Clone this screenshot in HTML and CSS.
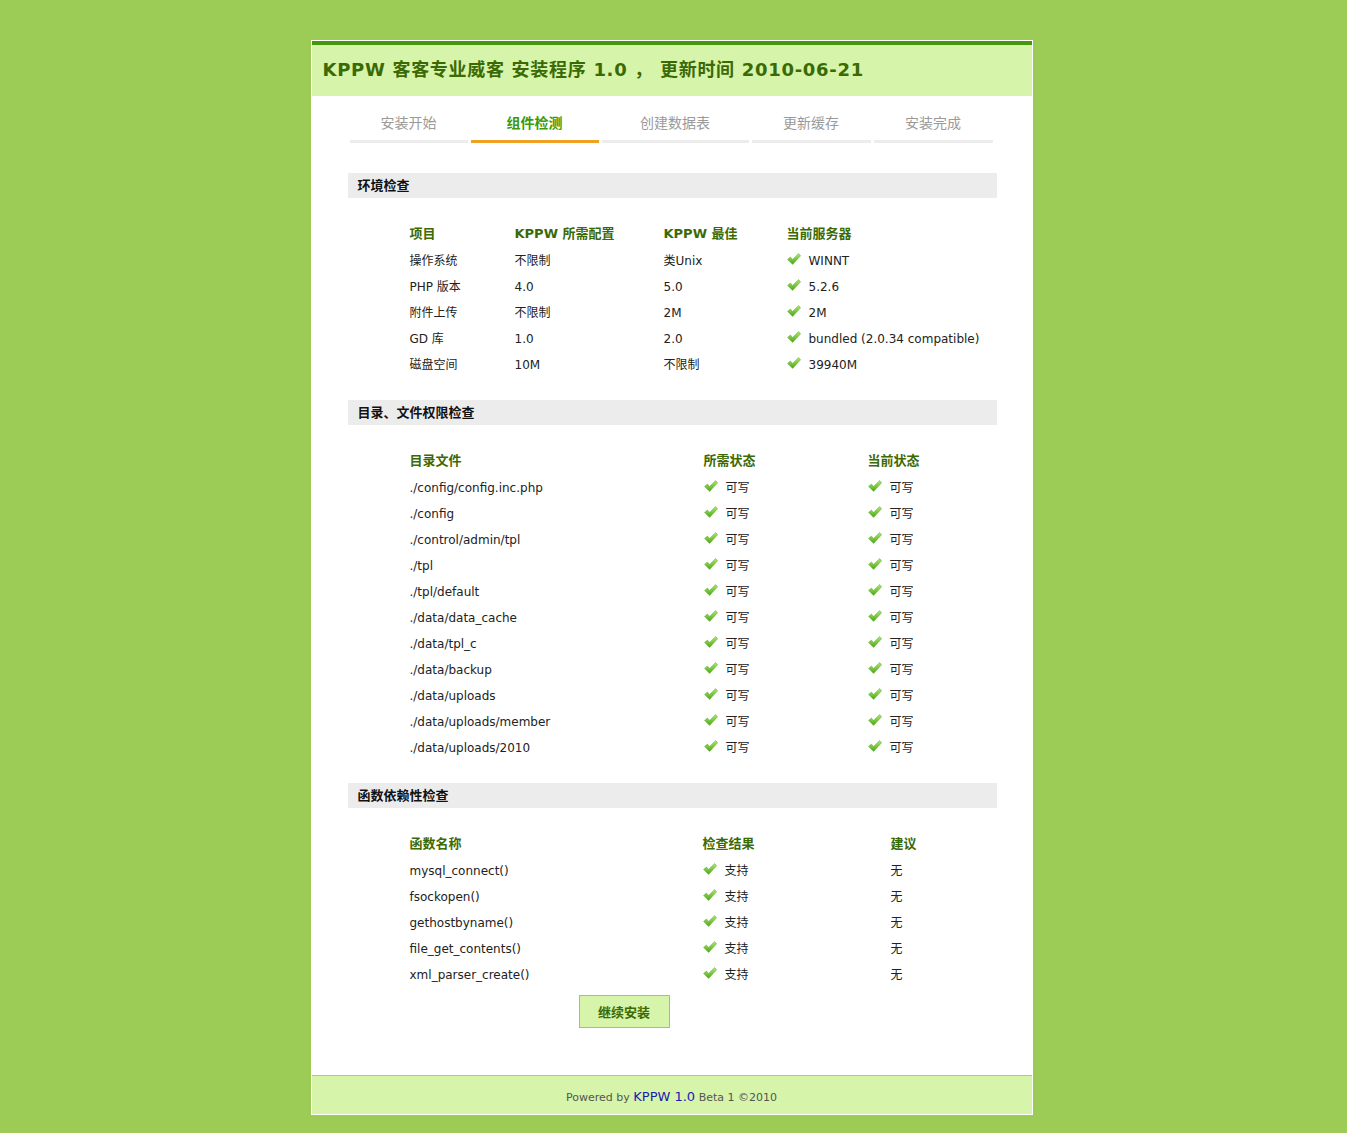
FILE: index.html
```html
<!DOCTYPE html>
<html>
<head>
    <meta charset="utf-8">
    <title>KPPW 安装程序 - 组件检测</title>
    <link rel="stylesheet" href="styles.css">
</head>
<body>
    <svg width="0" height="0" class="defs">
        <defs>
            <linearGradient id="ok-grad" x1="0" y1="0" x2="0" y2="1">
                <stop offset="0" stop-color="#acea70"/>
                <stop offset="1" stop-color="#4ca814"/>
            </linearGradient>
            <symbol id="ok" viewBox="0 0 14 12">
                <path d="M0.6 6.4 L3.4 4 L5.6 6.5 L11.6 0.6 L13.6 2.8 L5.6 11.4 Z" fill="url(#ok-grad)" stroke="#5aa824" stroke-width="0.5"/>
            </symbol>
        </defs>
    </svg>

    <div class="wrap">
        <div class="head">
            <h1>KPPW 客客专业威客 安装程序 1.0 ， 更新时间 2010-06-21</h1>
        </div>

        <div class="main">
            <ul class="steps">
                <li>安装开始</li>
                <li class="on">组件检测</li>
                <li>创建数据表</li>
                <li>更新缓存</li>
                <li>安装完成</li>
            </ul>

            <h2 class="sect">环境检查</h2>
            <div class="grid env">
                <div class="row th"><span>项目</span><span>KPPW 所需配置</span><span>KPPW 最佳</span><span>当前服务器</span></div>
                <div class="row"><span>操作系统</span><span>不限制</span><span>类Unix</span><span class="ok"><svg><use href="#ok"/></svg>WINNT</span></div>
                <div class="row"><span>PHP 版本</span><span>4.0</span><span>5.0</span><span class="ok"><svg><use href="#ok"/></svg>5.2.6</span></div>
                <div class="row"><span>附件上传</span><span>不限制</span><span>2M</span><span class="ok"><svg><use href="#ok"/></svg>2M</span></div>
                <div class="row"><span>GD 库</span><span>1.0</span><span>2.0</span><span class="ok"><svg><use href="#ok"/></svg>bundled (2.0.34 compatible)</span></div>
                <div class="row"><span>磁盘空间</span><span>10M</span><span>不限制</span><span class="ok"><svg><use href="#ok"/></svg>39940M</span></div>
            </div>

            <h2 class="sect">目录、文件权限检查</h2>
            <div class="grid dirs">
                <div class="row th"><span>目录文件</span><span>所需状态</span><span>当前状态</span></div>
                <div class="row"><span>./config/config.inc.php</span><span class="ok"><svg><use href="#ok"/></svg>可写</span><span class="ok"><svg><use href="#ok"/></svg>可写</span></div>
                <div class="row"><span>./config</span><span class="ok"><svg><use href="#ok"/></svg>可写</span><span class="ok"><svg><use href="#ok"/></svg>可写</span></div>
                <div class="row"><span>./control/admin/tpl</span><span class="ok"><svg><use href="#ok"/></svg>可写</span><span class="ok"><svg><use href="#ok"/></svg>可写</span></div>
                <div class="row"><span>./tpl</span><span class="ok"><svg><use href="#ok"/></svg>可写</span><span class="ok"><svg><use href="#ok"/></svg>可写</span></div>
                <div class="row"><span>./tpl/default</span><span class="ok"><svg><use href="#ok"/></svg>可写</span><span class="ok"><svg><use href="#ok"/></svg>可写</span></div>
                <div class="row"><span>./data/data_cache</span><span class="ok"><svg><use href="#ok"/></svg>可写</span><span class="ok"><svg><use href="#ok"/></svg>可写</span></div>
                <div class="row"><span>./data/tpl_c</span><span class="ok"><svg><use href="#ok"/></svg>可写</span><span class="ok"><svg><use href="#ok"/></svg>可写</span></div>
                <div class="row"><span>./data/backup</span><span class="ok"><svg><use href="#ok"/></svg>可写</span><span class="ok"><svg><use href="#ok"/></svg>可写</span></div>
                <div class="row"><span>./data/uploads</span><span class="ok"><svg><use href="#ok"/></svg>可写</span><span class="ok"><svg><use href="#ok"/></svg>可写</span></div>
                <div class="row"><span>./data/uploads/member</span><span class="ok"><svg><use href="#ok"/></svg>可写</span><span class="ok"><svg><use href="#ok"/></svg>可写</span></div>
                <div class="row"><span>./data/uploads/2010</span><span class="ok"><svg><use href="#ok"/></svg>可写</span><span class="ok"><svg><use href="#ok"/></svg>可写</span></div>
            </div>

            <h2 class="sect">函数依赖性检查</h2>
            <div class="grid funcs">
                <div class="row th"><span>函数名称</span><span>检查结果</span><span>建议</span></div>
                <div class="row"><span>mysql_connect()</span><span class="ok"><svg><use href="#ok"/></svg>支持</span><span>无</span></div>
                <div class="row"><span>fsockopen()</span><span class="ok"><svg><use href="#ok"/></svg>支持</span><span>无</span></div>
                <div class="row"><span>gethostbyname()</span><span class="ok"><svg><use href="#ok"/></svg>支持</span><span>无</span></div>
                <div class="row"><span>file_get_contents()</span><span class="ok"><svg><use href="#ok"/></svg>支持</span><span>无</span></div>
                <div class="row"><span>xml_parser_create()</span><span class="ok"><svg><use href="#ok"/></svg>支持</span><span>无</span></div>
            </div>

            <div class="actions">
                <button class="btn">继续安装</button>
            </div>
        </div>

        <div class="foot">
            Powered by <a href="#">KPPW 1.0</a> Beta 1 &copy;2010
        </div>
    </div>
</body>
</html>
```

FILE: styles.css
```css
body {
    margin: 0;
    padding: 0;
    background: #9ccb56;
    font-family: "DejaVu Sans", "Noto Sans CJK SC", sans-serif;
    font-size: 12px;
    color: #222;
}

.defs {
    position: absolute;
    width: 0;
    height: 0;
}

.wrap {
    width: 720px;
    margin: 40px 0 0 calc(50% - 363px);
    border: 1px solid #fff;
    background: #fff;
}

.head {
    background: #d6f4aa;
    border-top: 4px solid #45980b;
    height: 51px;
}

.head h1 {
    margin: 0;
    padding-left: 11px;
    line-height: 50px;
    font-size: 18px;
    letter-spacing: 0.7px;
    color: #3b6a04;
    font-weight: bold;
}

.main {
    padding: 0 35px 47px 36px;
}

/* step tabs */
.steps {
    list-style: none;
    margin: 0;
    padding: 14px 0 0 2px;
    display: grid;
    grid-template-columns: 118px 128px 147px 119px 119px;
    gap: 3px;
}

.steps li {
    text-align: center;
    line-height: 26px;
    padding-bottom: 4px;
    border-bottom: 3px solid #ececec;
    font-size: 14px;
    color: #9a9a9a;
}

.steps li.on {
    border-bottom-color: #f0a124;
    color: #3c9a08;
    font-weight: bold;
}

/* section headings */
.sect {
    margin: 30px 0 0;
    height: 25px;
    line-height: 25px;
    padding-left: 10px;
    background: #ececec;
    font-size: 13px;
    font-weight: bold;
    color: #111;
}

.grid + .sect {
    margin-top: 22px;
}

.grid {
    margin-top: 22px;
    padding-left: 62px;
}

.row {
    display: grid;
    height: 26px;
    line-height: 27px;
    align-items: center;
}

.row.th {
    margin-bottom: 2px;
    color: #3b6a04;
    font-size: 13px;
    font-weight: bold;
}

.env .row {
    grid-template-columns: 105px 149px 123px 1fr;
}

.dirs .row {
    grid-template-columns: 294px 164px 1fr;
}

.funcs .row {
    grid-template-columns: 293px 188px 1fr;
}

.ok {
    display: flex;
    align-items: center;
}

.ok svg {
    width: 14px;
    height: 12px;
    margin: -6px 8px 0 0;
    flex: none;
}

.actions {
    padding: 7px 0 0 231px;
}

.btn {
    width: 91px;
    height: 33px;
    background: #d6f4aa;
    border: 1px solid #9ccb56;
    font-family: inherit;
    font-size: 13px;
    font-weight: bold;
    color: #3b6a04;
    cursor: pointer;
}

.foot {
    background: #d6f4aa;
    border-top: 1px solid #a9d36c;
    height: 38px;
    line-height: 42px;
    text-align: center;
    font-size: 11px;
    color: #555;
}

.foot a {
    color: #1a1ab0;
    text-decoration: none;
    font-size: 13px;
}
```
